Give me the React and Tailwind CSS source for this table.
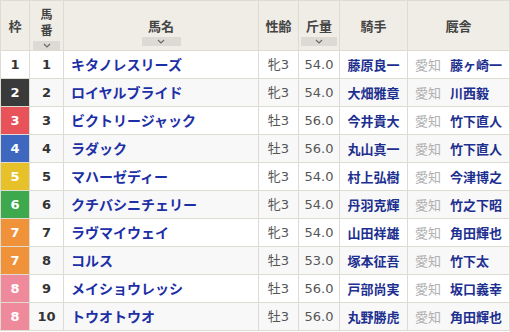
const FRAME = {
  1: 'bg-white text-[#333]',
  2: 'bg-[#3a3a3a] text-white',
  3: 'bg-[#e8535a] text-white',
  4: 'bg-[#3e68c0] text-white',
  5: 'bg-[#e7c12a] text-white',
  6: 'bg-[#3ea94c] text-white',
  7: 'bg-[#f0923a] text-white',
  8: 'bg-[#ef8a9c] text-white',
}

const horses = [
  [1, 1, 'キタノレスリーズ', '牝3', '54.0', '藤原良一', '藤ヶ崎一'],
  [2, 2, 'ロイヤルブライド', '牝3', '54.0', '大畑雅章', '川西毅'],
  [3, 3, 'ビクトリージャック', '牡3', '56.0', '今井貴大', '竹下直人'],
  [4, 4, 'ラダック', '牡3', '56.0', '丸山真一', '竹下直人'],
  [5, 5, 'マハーゼディー', '牝3', '54.0', '村上弘樹', '今津博之'],
  [6, 6, 'クチバシニチェリー', '牝3', '54.0', '丹羽克輝', '竹之下昭'],
  [7, 7, 'ラヴマイウェイ', '牝3', '54.0', '山田祥雄', '角田輝也'],
  [7, 8, 'コルス', '牡3', '53.0', '塚本征吾', '竹下太'],
  [8, 9, 'メイショウレッシ', '牡3', '56.0', '戸部尚実', '坂口義幸'],
  [8, 10, 'トウオトウオ', '牡3', '56.0', '丸野勝虎', '角田輝也'],
]

const JP = { fontFamily: '"Noto Sans CJK JP", sans-serif' }

function SortBtn({ w }) {
  return (
    <div className={`mx-auto mt-[3px] h-[9px] ${w} bg-[#dcdad3] flex items-center justify-center`}>
      <svg width="8" height="5" viewBox="0 0 8 5" fill="none" stroke="#666" strokeWidth="1.1">
        <path d="M1 1l3 3 3-3" />
      </svg>
    </div>
  )
}

export default function App() {
  const cell = 'border border-[#dedbd2] p-0'
  return (
    <div className="w-[510px] h-[332px] bg-white" style={{ fontFamily: '"DejaVu Sans", "Noto Sans CJK JP", sans-serif' }}>
      <table className="border-collapse table-fixed w-[509px]">
        <colgroup>
          <col className="w-[29px]" />
          <col className="w-[34px]" />
          <col className="w-[195px]" />
          <col className="w-[40px]" />
          <col className="w-[41px]" />
          <col className="w-[68px]" />
          <col className="w-[102px]" />
        </colgroup>
        <thead>
          <tr className="h-[50px] bg-[#efede6] text-[#444] text-[13px] font-bold" style={JP}>
            <th className={`${cell} font-bold`}>枠</th>
            <th className={`${cell} font-bold`}>
              <div className="text-[12px] leading-[16px] pt-[4px]">
                <div>馬</div>
                <div>番</div>
              </div>
              <div className="px-[3px]"><SortBtn w="w-full" /></div>
            </th>
            <th className={`${cell} font-bold`}>
              <div className="leading-[16px] pt-[12px]">馬名</div>
              <SortBtn w="w-[39px]" />
            </th>
            <th className={`${cell} font-bold`}>性齢</th>
            <th className={`${cell} font-bold`}>
              <div className="leading-[16px] pt-[12px]">斤量</div>
              <div className="px-[2px]"><SortBtn w="w-full" /></div>
            </th>
            <th className={`${cell} font-bold`}>騎手</th>
            <th className={`${cell} font-bold`}>厩舎</th>
          </tr>
        </thead>
        <tbody>
          {horses.map(([waku, num, name, sex, kin, jockey, trainer], i) => (
            <tr key={num} className={`h-[28px] ${i % 2 ? 'bg-[#f8f8f8]' : 'bg-white'}`}>
              <td className={`${cell} text-center text-[13px] font-bold ${FRAME[waku]}`}>{waku}</td>
              <td className={`${cell} text-center text-[13px] font-bold text-[#333]`}>{num}</td>
              <td className={`${cell} pl-[7px] text-[14px] font-bold text-[#1d2fa6]`} style={JP}>{name}</td>
              <td className={`${cell} text-center text-[13px] text-[#555]`} style={JP}>
                {sex.slice(0, 1)}<span style={{ fontFamily: '"DejaVu Sans", sans-serif' }}>{sex.slice(1)}</span>
              </td>
              <td className={`${cell} text-center text-[13px] text-[#555]`}>{kin}</td>
              <td className={`${cell} text-center text-[13px] font-bold text-[#1d2f8f]`} style={JP}>{jockey}</td>
              <td className={`${cell} pl-[7px] text-[13px]`} style={JP}>
                <span className="text-[#b0b0b0]">愛知</span>
                <span className="ml-[9px] font-bold text-[#1d2f8f]">{trainer}</span>
              </td>
            </tr>
          ))}
        </tbody>
      </table>
    </div>
  )
}
